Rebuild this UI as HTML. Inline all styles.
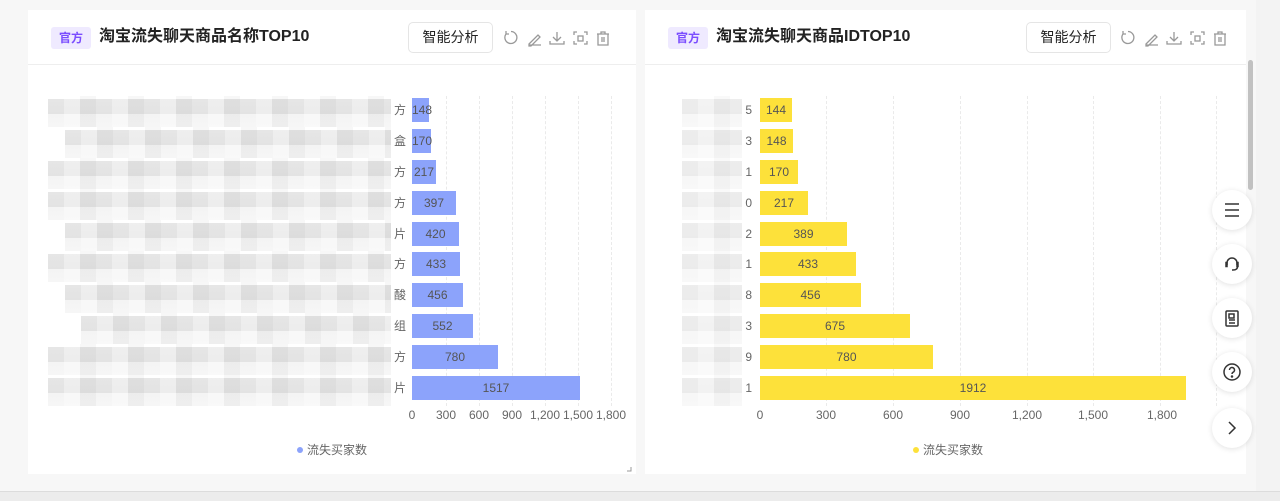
<!DOCTYPE html>
<html><head><meta charset="utf-8"><style>
*{margin:0;padding:0;box-sizing:border-box}
body{width:1280px;height:501px;background:#f7f7f7;font-family:"Liberation Sans","Noto Sans CJK SC",sans-serif;position:relative;overflow:hidden}
.card{position:absolute;top:10px;height:464px;background:#fff}
.hd{position:absolute;left:0;right:0;top:0;height:55px;border-bottom:1px solid #eeeeee}
.tag{position:absolute;left:23px;top:17px;width:40px;height:22px;background:#efeaff;color:#7b4dff;font-size:12px;line-height:22px;text-align:center;border-radius:3px;font-weight:bold}
.tt{position:absolute;left:71px;top:16px;font-size:16px;font-weight:bold;color:#222;line-height:22px}
.btn{position:absolute;top:12px;width:85px;height:31px;border:1px solid #e5e5e5;border-radius:5px;font-size:14px;color:#222;line-height:29px;text-align:center}
.ic{position:absolute;top:19px}
.abs{position:absolute}
.bar{position:absolute;height:24px;font-size:12px;color:#555;line-height:24px;text-align:center}
.b{background:#8ca3fb}.y{background:#fde13a}
.yl{position:absolute;font-size:12px;color:#666;line-height:24px;text-align:right}
.ax{position:absolute;top:408px;font-size:12px;color:#666;width:40px;text-align:center;margin-left:-20px}
.gl{position:absolute;top:96px;height:310px;border-left:1px dashed #eaeaea;width:0}
.blur{position:absolute;height:31px;background:repeating-linear-gradient(90deg,rgba(255,255,255,0) 0,rgba(255,255,255,0) 16px,rgba(255,255,255,.35) 16px,rgba(255,255,255,.35) 32px,rgba(0,0,0,.03) 32px,rgba(0,0,0,.03) 48px),linear-gradient(#fff 0,#fff 3px,#e6e6e6 3px,#e3e3e3 18px,#f4f4f4 18px,#f6f6f6 31px)}
.r .blur{opacity:.7}
.fb{position:absolute;left:1212px;width:40px;height:40px;border-radius:50%;background:#fff;box-shadow:0 1px 6px rgba(0,0,0,.12)}
</style></head><body>
<div class="card" style="left:28px;width:608px">
<div class="hd"><div class="tag">官方</div><div class="tt">淘宝流失聊天商品名称TOP10</div>
<div class="btn" style="left:380px">智能分析</div>
<svg class="ic" style="left:474px" width="110" height="18" fill="none" stroke="#999" stroke-width="1.3">
<path d="M4 5a6 6 0 1 0 5-2.5M4 2v3h3"/>
<path d="M27 15l9-9 2 2-9 9h-2zM27 16h12"/>
<path d="M55 3v9M51 8l4 4 4-4M48 12v3h14v-3"/>
<path d="M72 6V3h3M82 3h3v3M85 12v3h-3M75 15h-3v-3"/><rect x="76" y="7" width="5" height="5"/>
<path d="M95 5h12M99 5V3h4v2M96 5v11h10V5M100 8v5M102 8v5"/>
</svg></div>
</div>
<div class="card" style="left:645px;width:601px">
<div class="hd"><div class="tag">官方</div><div class="tt">淘宝流失聊天商品IDTOP10</div>
<div class="btn" style="left:381px">智能分析</div>
<svg class="ic" style="left:474px" width="110" height="18" fill="none" stroke="#999" stroke-width="1.3">
<path d="M4 5a6 6 0 1 0 5-2.5M4 2v3h3"/>
<path d="M27 15l9-9 2 2-9 9h-2zM27 16h12"/>
<path d="M55 3v9M51 8l4 4 4-4M48 12v3h14v-3"/>
<path d="M72 6V3h3M82 3h3v3M85 12v3h-3M75 15h-3v-3"/><rect x="76" y="7" width="5" height="5"/>
<path d="M95 5h12M99 5V3h4v2M96 5v11h10V5M100 8v5M102 8v5"/>
</svg></div>
</div>

<div class="gl" style="left:446px"></div><div class="gl" style="left:479px"></div><div class="gl" style="left:512px"></div><div class="gl" style="left:545px"></div><div class="gl" style="left:578px"></div><div class="gl" style="left:611px"></div>
<div class="blur" style="left:48px;width:343px;top:96px"></div>
<div class="blur" style="left:65px;width:326px;top:127px"></div>
<div class="blur" style="left:48px;width:343px;top:158px"></div>
<div class="blur" style="left:48px;width:343px;top:189px"></div>
<div class="blur" style="left:65px;width:326px;top:220px"></div>
<div class="blur" style="left:48px;width:343px;top:251px"></div>
<div class="blur" style="left:65px;width:326px;top:282px"></div>
<div class="blur" style="left:81px;width:310px;top:313px"></div>
<div class="blur" style="left:48px;width:343px;top:344px"></div>
<div class="blur" style="left:48px;width:343px;top:375px;height:31px"></div>
<div class="yl" style="left:388px;width:18px;top:98px">方</div>
<div class="yl" style="left:388px;width:18px;top:129px">盒</div>
<div class="yl" style="left:388px;width:18px;top:160px">方</div>
<div class="yl" style="left:388px;width:18px;top:191px">方</div>
<div class="yl" style="left:388px;width:18px;top:222px">片</div>
<div class="yl" style="left:388px;width:18px;top:252px">方</div>
<div class="yl" style="left:388px;width:18px;top:283px">酸</div>
<div class="yl" style="left:388px;width:18px;top:314px">组</div>
<div class="yl" style="left:388px;width:18px;top:345px">方</div>
<div class="yl" style="left:388px;width:18px;top:376px">片</div>
<div class="bar b" style="left:412px;top:98px;width:17px">148</div>
<div class="bar b" style="left:412px;top:129px;width:19px">170</div>
<div class="bar b" style="left:412px;top:160px;width:24px">217</div>
<div class="bar b" style="left:412px;top:191px;width:44px">397</div>
<div class="bar b" style="left:412px;top:222px;width:47px">420</div>
<div class="bar b" style="left:412px;top:252px;width:48px">433</div>
<div class="bar b" style="left:412px;top:283px;width:51px">456</div>
<div class="bar b" style="left:412px;top:314px;width:61px">552</div>
<div class="bar b" style="left:412px;top:345px;width:86px">780</div>
<div class="bar b" style="left:412px;top:376px;width:168px">1517</div>
<div class="ax" style="left:412px">0</div><div class="ax" style="left:446px">300</div><div class="ax" style="left:479px">600</div><div class="ax" style="left:512px">900</div><div class="ax" style="left:545px">1,200</div><div class="ax" style="left:578px">1,500</div><div class="ax" style="left:611px">1,800</div>
<div class="abs" style="left:297px;top:442px;font-size:12px;color:#666;line-height:16px"><span style="display:inline-block;width:6px;height:6px;border-radius:50%;background:#8ca3fb;margin-right:4px;vertical-align:1px"></span>流失买家数</div>
<svg class="abs" style="left:626px;top:466px" width="6" height="6"><path d="M5 1v4H1" stroke="#999" fill="none"/></svg>

<div class="gl" style="left:826px"></div><div class="gl" style="left:893px"></div><div class="gl" style="left:960px"></div><div class="gl" style="left:1027px"></div><div class="gl" style="left:1093px"></div><div class="gl" style="left:1160px"></div><div class="gl" style="left:1216px"></div>
<div class="r">
<div class="blur" style="left:682px;width:60px;top:96px"></div>
<div class="blur" style="left:682px;width:60px;top:127px"></div>
<div class="blur" style="left:682px;width:60px;top:158px"></div>
<div class="blur" style="left:682px;width:60px;top:189px"></div>
<div class="blur" style="left:682px;width:60px;top:220px"></div>
<div class="blur" style="left:682px;width:60px;top:251px"></div>
<div class="blur" style="left:682px;width:60px;top:282px"></div>
<div class="blur" style="left:682px;width:60px;top:313px"></div>
<div class="blur" style="left:682px;width:60px;top:344px"></div>
<div class="blur" style="left:682px;width:60px;top:375px"></div>
</div>
<div class="yl" style="left:740px;width:12px;top:98px">5</div>
<div class="yl" style="left:740px;width:12px;top:129px">3</div>
<div class="yl" style="left:740px;width:12px;top:160px">1</div>
<div class="yl" style="left:740px;width:12px;top:191px">0</div>
<div class="yl" style="left:740px;width:12px;top:222px">2</div>
<div class="yl" style="left:740px;width:12px;top:252px">1</div>
<div class="yl" style="left:740px;width:12px;top:283px">8</div>
<div class="yl" style="left:740px;width:12px;top:314px">3</div>
<div class="yl" style="left:740px;width:12px;top:345px">9</div>
<div class="yl" style="left:740px;width:12px;top:376px">1</div>
<div class="bar y" style="left:760px;top:98px;width:32px">144</div>
<div class="bar y" style="left:760px;top:129px;width:33px">148</div>
<div class="bar y" style="left:760px;top:160px;width:38px">170</div>
<div class="bar y" style="left:760px;top:191px;width:48px">217</div>
<div class="bar y" style="left:760px;top:222px;width:87px">389</div>
<div class="bar y" style="left:760px;top:252px;width:96px">433</div>
<div class="bar y" style="left:760px;top:283px;width:101px">456</div>
<div class="bar y" style="left:760px;top:314px;width:150px">675</div>
<div class="bar y" style="left:760px;top:345px;width:173px">780</div>
<div class="bar y" style="left:760px;top:376px;width:426px">1912</div>
<div class="ax" style="left:760px">0</div><div class="ax" style="left:826px">300</div><div class="ax" style="left:893px">600</div><div class="ax" style="left:960px">900</div><div class="ax" style="left:1027px">1,200</div><div class="ax" style="left:1093px">1,500</div><div class="ax" style="left:1162px">1,800</div>
<div class="abs" style="left:913px;top:442px;font-size:12px;color:#666;line-height:16px"><span style="display:inline-block;width:6px;height:6px;border-radius:50%;background:#fde13a;margin-right:4px;vertical-align:1px"></span>流失买家数</div>

<div class="abs" style="left:1246px;top:0;width:10px;height:493px;background:#f7f7f7"></div>
<div class="abs" style="left:1248px;top:60px;width:5px;height:130px;background:#c1c1c1;border-radius:3px"></div>
<div class="abs" style="left:1256px;top:0;width:24px;height:493px;background:#f3f3f3"></div>
<div class="abs" style="left:0;top:491px;width:1280px;height:10px;background:#ececec;border-top:1px solid #dcdcdc"></div>

<div class="fb" style="top:190px"><svg width="40" height="40" stroke="#333" stroke-width="1.5" fill="none"><path d="M13 14h14M13 20h14M13 26h14"/></svg></div>
<div class="fb" style="top:244px"><svg width="40" height="40" stroke="#333" stroke-width="1.5" fill="none"><path d="M15 21v-2a5 5 0 0 1 10 0v2"/><path d="M15 18.5h-1v4h1zM25 18.5h1v4h-1z"/><path d="M25.5 22.5q0 3.5-4.5 3.5h-1"/></svg></div>
<div class="fb" style="top:298px"><svg width="40" height="40" stroke="#333" stroke-width="1.5" fill="none"><rect x="14" y="13" width="12" height="15" rx="1"/><rect x="17" y="16" width="5" height="4"/><path d="M17 22h6M17 25h6"/></svg></div>
<div class="fb" style="top:352px"><svg width="40" height="40" stroke="#333" stroke-width="1.5" fill="none"><circle cx="20" cy="20" r="8"/><path d="M17.5 18a2.5 2.5 0 1 1 3.5 2.3c-.7.4-1 .9-1 1.7"/><circle cx="20" cy="24.5" r=".5" fill="#333"/></svg></div>
<div class="fb" style="top:408px"><svg width="40" height="40" stroke="#333" stroke-width="1.5" fill="none"><path d="M17 14l6 6-6 6"/></svg></div>
</body></html>
